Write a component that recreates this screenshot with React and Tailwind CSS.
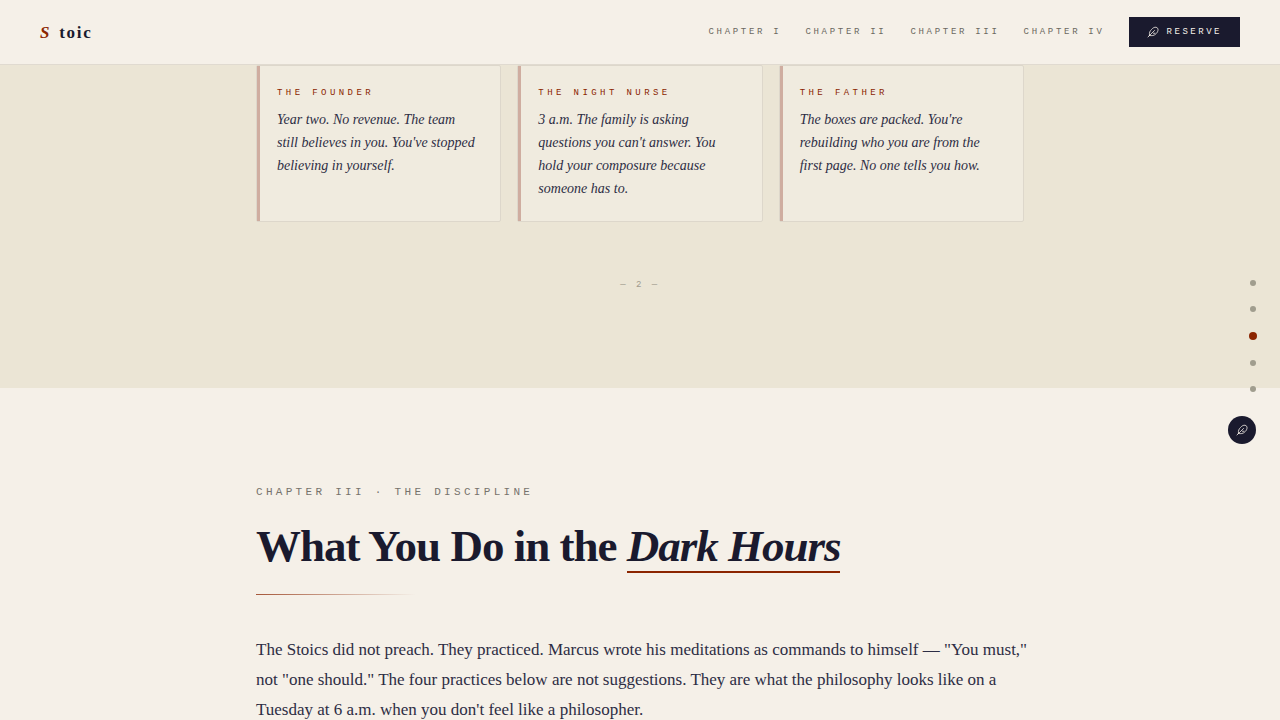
const chapters = ["Chapter I", "Chapter II", "Chapter III", "Chapter IV"];

const readers = [
  {
    name: "The Founder",
    text: "Year two. No revenue. The team still believes in you. You've stopped believing in yourself.",
  },
  {
    name: "The Night Nurse",
    text: "3 a.m. The family is asking questions you can't answer. You hold your composure because someone has to.",
  },
  {
    name: "The Father",
    text: "The boxes are packed. You're rebuilding who you are from the first page. No one tells you how.",
  },
];

const sections = ["Cover", "Chapter I", "Chapter II", "Chapter III", "Chapter IV"];

const mono = "font-['Liberation_Mono',monospace] uppercase";

function Quill() {
  return (
    <svg className="size-3" viewBox="0 0 24 24" fill="none" stroke="currentColor" strokeWidth="1.6" strokeLinecap="round" strokeLinejoin="round" aria-hidden="true">
      <path d="M5 19c-1-6 1-9 4-12 3-3.500 6-5 9-4.500 3 .5 4.500 3 4 6-.5 3-2 5.500-5 8-3 2.500-7 3.500-12 2.500z" />
      <path d="M2 22 15 9" />
      <path d="M16 14.500H13" />
    </svg>
  );
}

function Header() {
  return (
    <header className="sticky top-0 z-20 flex h-[65px] items-center justify-between border-b border-[#e0dad0] bg-[#f5f0e8] px-10">
      <a href="#top" className="flex items-center gap-2 pt-px text-[17px] font-bold tracking-[0.1em] text-[#1a1a2e]">
        <span className="italic text-[#8b2500]">S</span>
        <span>toic</span>
      </a>
      <nav className="flex items-center gap-6">
        {chapters.map((c) => (
          <a key={c} href="#chapter" className={`${mono} text-[9px] leading-4 tracking-[0.3em] text-[#6b6860]`}>
            {c}
          </a>
        ))}
        <button className={`${mono} flex h-[30px] cursor-pointer items-center gap-2 bg-[#1a1a2e] px-[18px] text-[9px] leading-4 tracking-[0.28em] text-[#f5f0e8]`}>
          <Quill />
          Reserve
        </button>
      </nav>
    </header>
  );
}

function ReaderCard({ name, text }) {
  return (
    <article className="relative rounded-[2px] border border-[#ddd7cb] bg-[#f0ebdf] pt-5 pr-[22px] pb-[21px] pl-5">
      <span className="absolute inset-y-0 left-0 w-[3px] bg-[#cfada0]" />
      <h3 className={`${mono} mb-2 text-[9px] leading-[14px] tracking-[0.38em] text-[#8b2500]`}>{name}</h3>
      <p className="text-[14px] italic leading-[23px] text-[#2d2d44]">{text}</p>
    </article>
  );
}

function SideNav() {
  return (
    <aside className="fixed right-6 top-70 z-10 flex flex-col items-end gap-6">
      <nav className="-mr-px flex flex-col items-center gap-5">
        {sections.map((s, i) => (
          <a
            key={s}
            href="#section"
            aria-label={s}
            className={i === 2 ? "size-2 rounded-full bg-[#8b2500]" : "size-1.5 rounded-full bg-[#a09d8e]"}
          />
        ))}
      </nav>
      <button aria-label="Reserve" className="flex size-7 cursor-pointer items-center justify-center rounded-full bg-[#1a1a2e] text-[#f5f0e8]">
        <Quill />
      </button>
    </aside>
  );
}

export default function App() {
  return (
    <div className="min-h-screen bg-[#f5f0e8] font-['Liberation_Serif',serif] text-[#1a1a2e]">
      <Header />
      <SideNav />
      <section className="bg-[#ebe5d5] pb-24">
        <div className="mx-auto max-w-3xl">
          <div className="grid grid-cols-3 gap-4">
            {readers.map((r) => (
              <ReaderCard key={r.name} name={r.name} text={r.text} />
            ))}
          </div>
          <p className={`${mono} mt-14 text-center text-[9px] leading-[14px] tracking-[0.28em] text-[#a09b8e]`}>— 2 —</p>
        </div>
      </section>
      <section className="py-24">
        <div className="mx-auto max-w-3xl">
          <p className={`${mono} mb-5 text-[11px] leading-4 tracking-[0.3em] text-[#77736c]`}>
            Chapter III · The Discipline
          </p>
          <h2 className="text-[45px] font-bold leading-[52px] tracking-[-1px]">
            What You Do in the <em className="border-b-2 border-[#8b2500]">Dark Hours</em>
          </h2>
          <div className="mb-10 mt-[22px] h-px w-40 bg-linear-to-r from-[#8b2500]/75 to-[#8b2500]/0" />
          <p className="-mr-4 text-[17px] leading-[30px] text-[#2d2d44]">
            The Stoics did not preach. They practiced. Marcus wrote his meditations as commands to himself — "You must,"
            not "one should." The four practices below are not suggestions. They are what the philosophy looks like on a
            Tuesday at 6 a.m. when you don't feel like a philosopher.
          </p>
        </div>
      </section>
    </div>
  );
}
